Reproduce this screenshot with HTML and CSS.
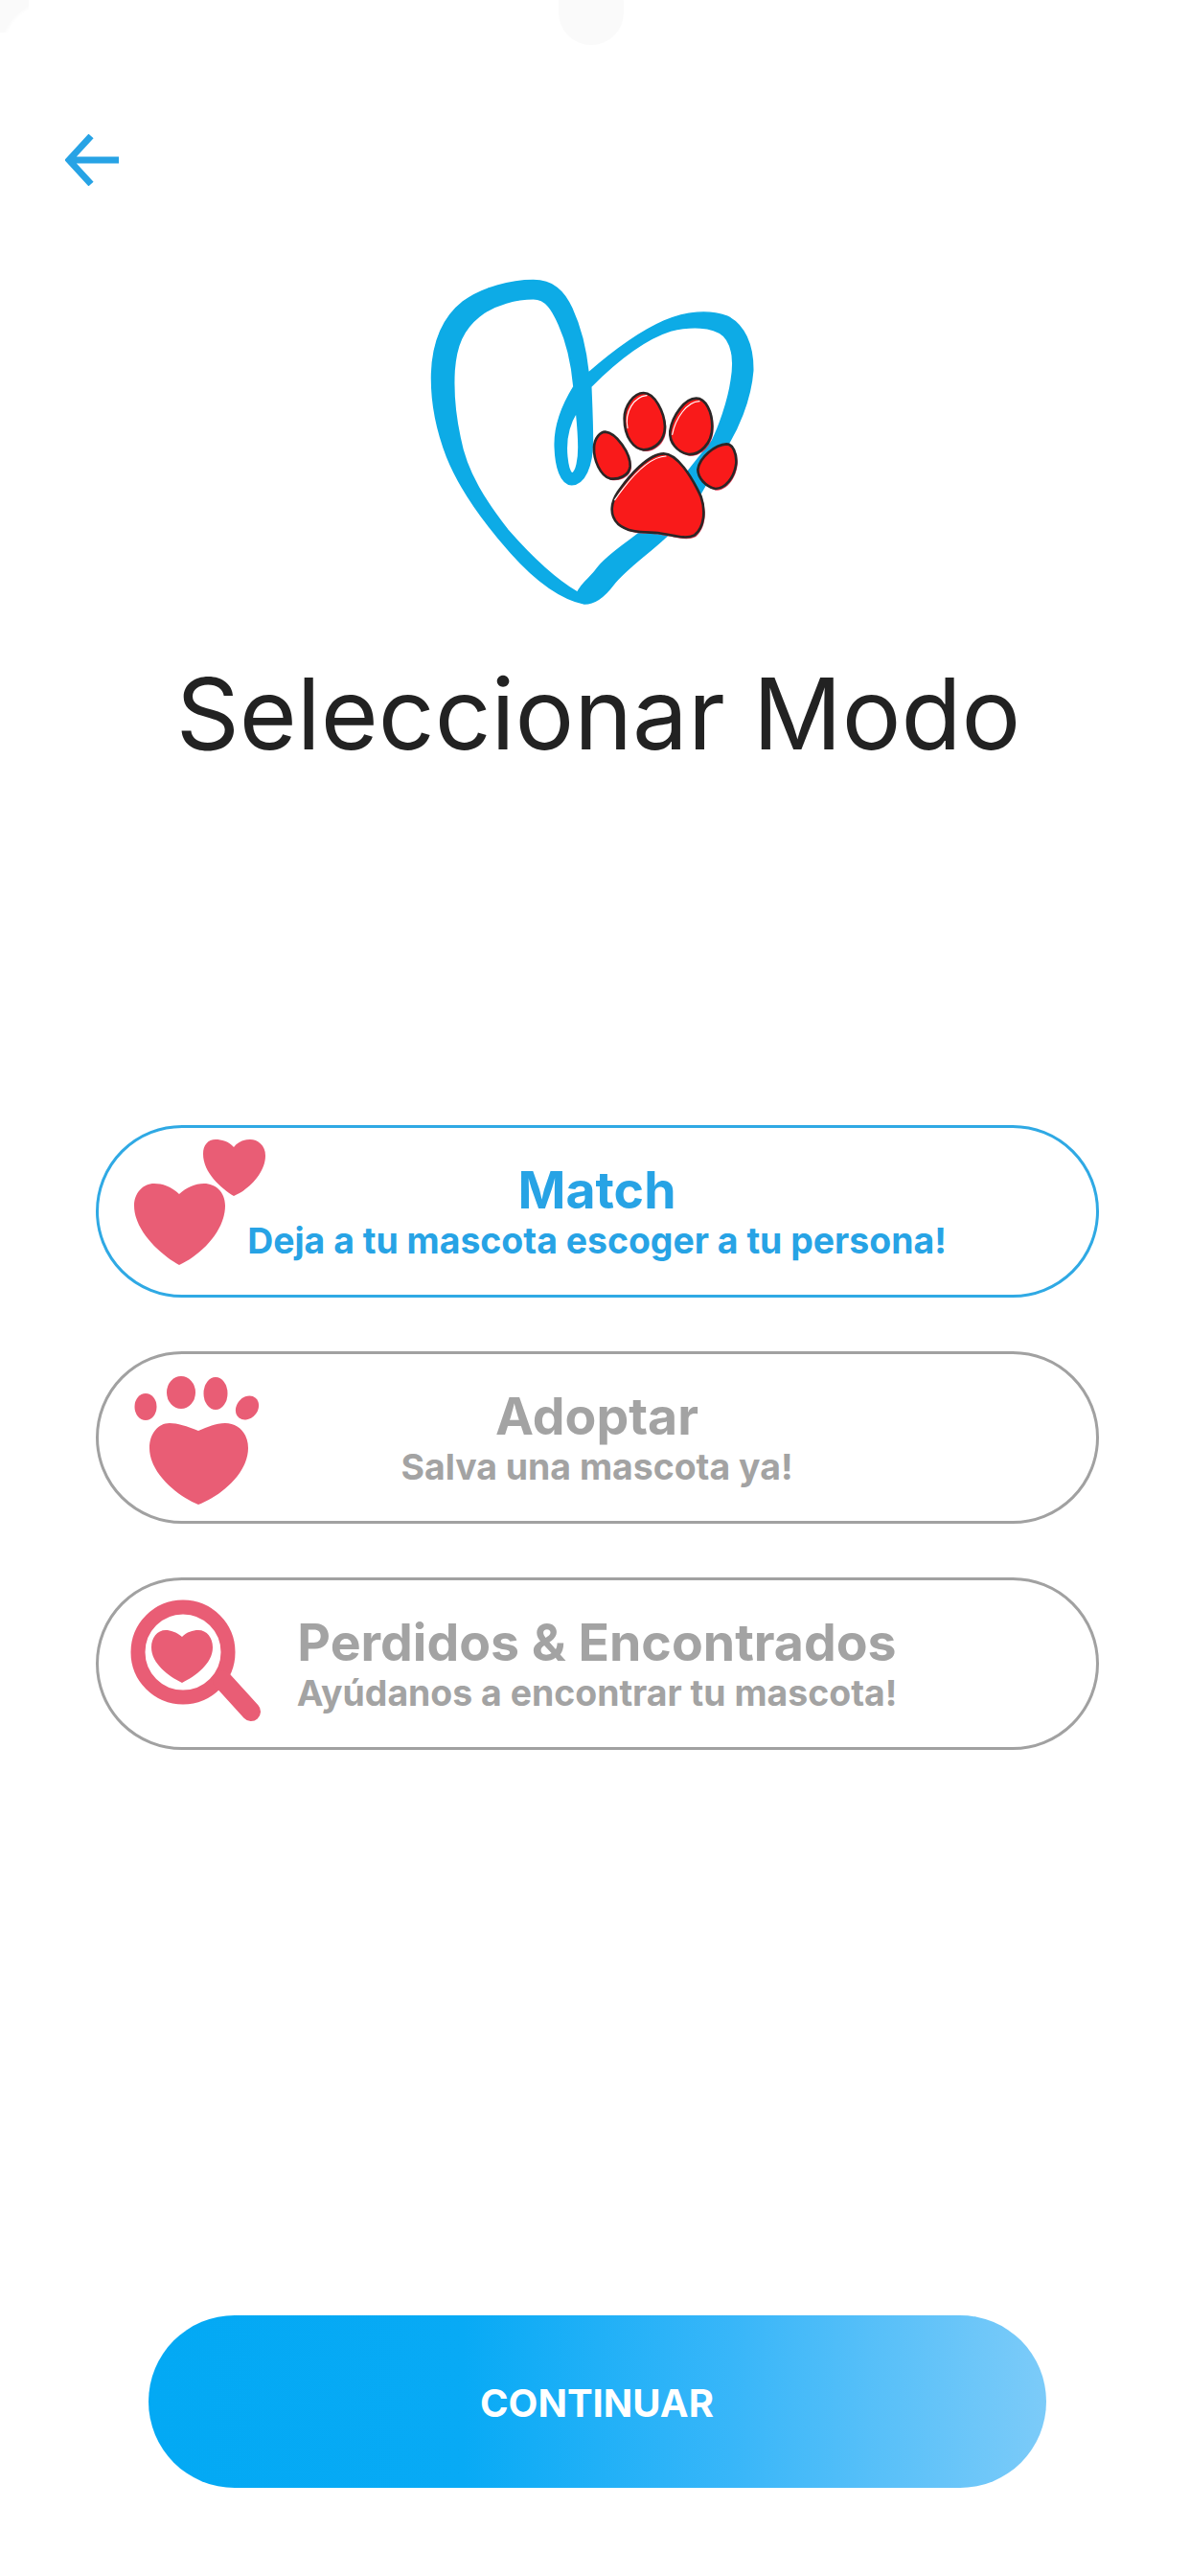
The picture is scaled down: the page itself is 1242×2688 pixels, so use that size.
FILE: index.html
```html
<!DOCTYPE html>
<html lang="es">
<head>
<meta charset="utf-8">
<title>Seleccionar Modo</title>
<link rel="stylesheet" href="styles.css">
</head>
<body>
<main class="page">
  <div class="notch"></div>
  <button class="back" aria-label="Volver">
    <svg class="back-icon" viewBox="0 0 56 54"><path d="M27 2 4 27l23 25M4 27h52" fill="none" stroke="#27a3e5" stroke-width="7"/></svg>
  </button>
  <svg class="logo" viewBox="0 0 1260 1200">
    <path fill="#0dabe6" stroke="#0dabe6" stroke-width="5" fill-rule="evenodd" d="M630 1110C560 1095 480 1040 400 950C320 860 240 750 200 650C165 560 150 470 152 390C155 300 180 220 250 165C310 120 400 98 470 98C530 98 565 130 590 185C620 250 635 320 642 388C720 320 800 260 880 225C950 195 1020 190 1075 210C1130 235 1158 300 1157 380C1150 470 1110 570 1060 640C1000 760 950 850 880 905C820 960 760 1000 720 1050C690 1090 660 1110 630 1110ZM608 1075C540 1035 460 960 390 880C320 790 260 700 240 590C225 520 218 450 222 380C228 300 250 250 300 210C350 170 420 155 470 155C510 155 530 190 550 235C575 290 590 350 597 430C560 490 535 550 538 620C540 680 555 735 590 737C630 735 655 680 655 600C655 540 652 480 650 430C730 350 820 280 900 255C960 240 1030 240 1065 270C1095 300 1100 350 1090 410C1080 480 1050 560 1030 600L800 890C750 930 700 960 670 1000C650 1030 625 1040 608 1075ZM605 510C580 550 570 600 575 650C578 680 585 700 592 703C605 695 612 660 612 620C612 580 608 540 605 510Z"/>
    <g class="paw-shadow" transform="translate(4 5)">
      <path d="M695 572C730 575 775 640 773 680C770 710 735 722 710 718C680 710 658 660 660 620C662 590 680 572 695 572Z"/>
      <path d="M815 450C850 450 880 510 882 555C882 600 850 628 815 628C785 625 755 590 755 530C755 490 785 450 815 450Z"/>
      <path d="M980 467C1010 467 1030 510 1030 555C1030 610 990 645 955 642C920 635 895 605 898 570C905 520 945 467 980 467Z"/>
      <path d="M1075 610C1095 610 1107 640 1105 670C1100 715 1070 750 1040 750C1010 745 985 715 985 690C990 650 1040 612 1075 610Z"/>
      <path d="M878 640C920 640 965 710 995 775C1010 820 1005 870 975 895C945 910 910 895 860 888C820 885 770 890 735 860C705 830 715 790 735 760C770 710 830 640 878 640Z"/>
    </g>
    <g class="paw">
      <path d="M695 572C730 575 775 640 773 680C770 710 735 722 710 718C680 710 658 660 660 620C662 590 680 572 695 572Z"/>
      <path d="M815 450C850 450 880 510 882 555C882 600 850 628 815 628C785 625 755 590 755 530C755 490 785 450 815 450Z"/>
      <path d="M980 467C1010 467 1030 510 1030 555C1030 610 990 645 955 642C920 635 895 605 898 570C905 520 945 467 980 467Z"/>
      <path d="M1075 610C1095 610 1107 640 1105 670C1100 715 1070 750 1040 750C1010 745 985 715 985 690C990 650 1040 612 1075 610Z"/>
      <path d="M878 640C920 640 965 710 995 775C1010 820 1005 870 975 895C945 910 910 895 860 888C820 885 770 890 735 860C705 830 715 790 735 760C770 710 830 640 878 640Z"/>
    </g>
    <g class="paw-light">
      <path d="M765 560C755 510 785 462 825 458"/>
      <path d="M905 580C915 530 950 478 990 476"/>
      <path d="M725 785C770 720 830 650 885 648"/>
    </g>
  </svg>
  <h1 class="title">Seleccionar Modo</h1>
  <section class="modes">
    <button class="mode mode-active">
      <svg class="mode-icon" viewBox="0 0 160 160">
        <path d="M58 66C50 58 40 55 32 55C20 55 11 65 11 78C11 105 40 130 58 140C80 130 106 105 106 78C106 64 96 55 84 55C74 55 66 59 58 66Z"/>
        <path d="M115 17C110 11 102 9 96 9C88 9 83 15 83 24C83 44 102 60 115 68C130 62 148 44 148 26C148 15 140 9 132 9C125 9 119 12 115 17Z"/>
      </svg>
      <span class="mode-name">Match</span>
      <span class="mode-desc">Deja a tu mascota escoger a tu persona!</span>
    </button>
    <button class="mode">
      <svg class="mode-icon" viewBox="0 0 160 160">
        <ellipse cx="23" cy="52" rx="11.5" ry="14"/>
        <ellipse cx="60" cy="37" rx="15" ry="17"/>
        <ellipse cx="96" cy="38" rx="12.5" ry="17"/>
        <ellipse cx="129" cy="53" rx="11" ry="13.5" transform="rotate(40 129 53)"/>
        <path d="M78 77C66 72 56 69 48 69C36 69 27 80 27 95C27 122 58 146 78 154C100 146 130 122 130 95C130 80 120 69 106 69C96 69 88 73 78 77Z"/>
      </svg>
      <span class="mode-name">Adoptar</span>
      <span class="mode-desc">Salva una mascota ya!</span>
    </button>
    <button class="mode">
      <svg class="mode-icon" viewBox="0 0 160 160">
        <circle class="lens" cx="62" cy="72" r="47"/>
        <path class="lens-handle" d="M103 101 133 134"/>
        <path d="M61 56C55 51 49 49 44 49C35 49 29 57 29 67C29 84 47 97 61 104C75 97 93 84 93 67C93 57 87 49 78 49C72 49 66 51 61 56Z"/>
      </svg>
      <span class="mode-name">Perdidos &amp; Encontrados</span>
      <span class="mode-desc">Ayúdanos a encontrar tu mascota!</span>
    </button>
  </section>
  <button class="continue">CONTINUAR</button>
</main>
</body>
</html>
```
FILE: styles.css
```css
* { box-sizing: border-box; }
html, body { margin: 0; padding: 0; background: #fff; }
.page {
  position: relative;
  width: 1242px;
  height: 2688px;
  overflow: hidden;
  display: flex;
  flex-direction: column;
  align-items: center;
  padding: 140px 0 92px 4px;
  font-family: Inter, "Liberation Sans", sans-serif;
  background: #fff;
}
.page::before {
  content: "";
  position: absolute;
  left: 0;
  top: 0;
  width: 30px;
  height: 34px;
  background: radial-gradient(circle at 60px 60px, transparent 58px, #fafafa 62px);
}
.notch {
  position: absolute;
  left: 583px;
  top: -30px;
  width: 68px;
  height: 77px;
  border-radius: 34px;
  background: #fafafa;
}
button { font-family: inherit; padding: 0; background: none; border: 0; }
.back { align-self: flex-start; margin-left: 64px; width: 56px; height: 54px; display: block; }
.back-icon { display: block; width: 56px; height: 54px; }
.logo { display: block; width: 420px; height: 400px; margin: 66px 0 0 -26px; }
.paw-shadow path { fill: #e2344e; }
.paw path { fill: #f91a1a; stroke: #2b2626; stroke-width: 8; }
.paw-light path { fill: none; stroke: #fff; stroke-width: 3.5; stroke-linecap: round; }
.title {
  margin: 25px 0 0 3px;
  font-size: 103px;
  line-height: 120px;
  font-weight: 400;
  color: #222;
}
.modes {
  display: flex;
  flex-direction: column;
  gap: 56px;
  width: 1047px;
  margin-top: 369px;
}
.mode {
  position: relative;
  display: flex;
  flex-direction: column;
  align-items: center;
  justify-content: center;
  height: 180px;
  border: 3.5px solid #a1a1a1;
  border-radius: 90px;
  color: #a3a3a3;
  font-weight: 700;
}
.mode-active { border-color: #2fa9e4; color: #27a3e5; }
.mode-icon {
  position: absolute;
  left: 26.5px;
  top: 2.5px;
  width: 160px;
  height: 160px;
  fill: #e95d75;
}
.lens { fill: none; stroke: #e95d75; stroke-width: 15; }
.lens-handle { fill: none; stroke: #e95d75; stroke-width: 20; stroke-linecap: round; }
.mode-name { font-size: 53.6px; line-height: 58px; margin-bottom: 3px; }
.mode-desc { font-size: 37.4px; line-height: 42px; }
.continue {
  margin-top: auto;
  width: 937px;
  height: 180px;
  border-radius: 90px;
  background: linear-gradient(90deg, #03a9f4 0%, #08aaf5 35%, #38b6f9 65%, #7ccbf9 100%);
  color: #fff;
  font-size: 40px;
  font-weight: 700;
  padding-top: 2px;
}
```
